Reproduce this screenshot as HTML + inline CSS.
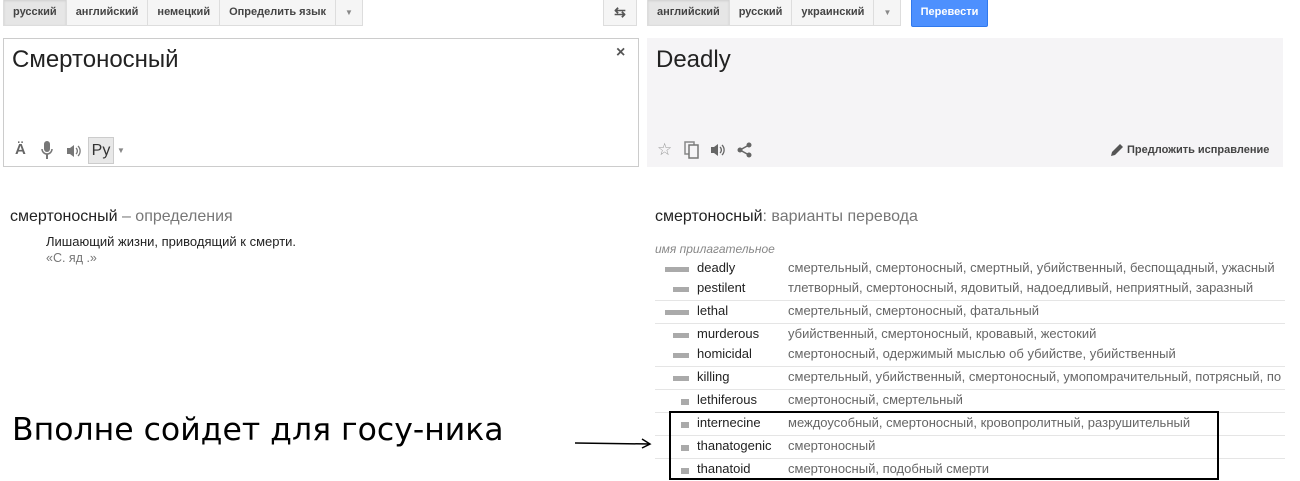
<!DOCTYPE html>
<html><head><meta charset="utf-8"><style>
*{margin:0;padding:0;box-sizing:border-box}
body{width:1300px;height:481px;background:#fff;position:relative;overflow:hidden;font-family:"Liberation Sans",Arial,sans-serif;color:#222}
.a{position:absolute;white-space:nowrap}
.tabs{position:absolute;top:0;height:26px;display:flex;border:1px solid #ddd;border-top:none;background:#f5f5f5;font-size:11px;font-weight:bold;color:#444}
.tabs div{padding:0 9px;line-height:25px;border-right:1px solid #ddd}
.tabs div:last-child{border-right:none}
.tabs .sel{background:#e6e6e6;box-shadow:inset 0 1px 2px rgba(0,0,0,.1)}
.car{font-size:8px;color:#888}
.row{position:absolute;left:655px;width:630px;height:23px;font-size:12.5px;overflow:hidden}
.bar{position:absolute;top:10px;height:5px;background:#aaa}
.w{position:absolute;left:42px;top:3px;color:#222;font-size:13px}
.t{position:absolute;left:133px;top:3px;color:#666;font-size:13px}
.ln{position:absolute;left:655px;width:630px;height:1px;background:#e5e5e5}
</style></head><body>
<div class="tabs" style="left:3px"><div class="sel">русский</div><div>английский</div><div>немецкий</div><div>Определить язык</div><div class="car">▼</div></div>
<div class="a" style="left:603px;top:0;width:34px;height:26px;border:1px solid #ddd;border-top:none;background:#f5f5f5;text-align:center;line-height:24px;color:#555;font-size:14px;font-weight:bold">⇆</div>
<div class="tabs" style="left:647px"><div class="sel">английский</div><div>русский</div><div>украинский</div><div class="car">▼</div></div>
<div class="a" style="left:911px;top:0;width:77px;height:27px;background:#4d90fe;border:1px solid #3079ed;border-top:none;border-radius:0 0 2px 2px;color:#fff;font-size:11px;font-weight:bold;text-align:center;line-height:25px">Перевести</div>

<div class="a" style="left:3px;top:38px;width:636px;height:129px;border:1px solid #ccc;background:#fff"></div>
<div class="a" style="left:12px;top:46px;font-size:24px;color:#222">Смертоносный</div>
<div class="a" style="left:616px;top:44px;font-size:16px;color:#555;font-weight:bold">×</div>
<div class="a" style="left:15px;top:141px;font-size:15px;color:#666;font-weight:bold">Ä</div>
<svg class="a" style="left:40px;top:141px" width="14" height="20"><rect x="4" y="0" width="6" height="11" rx="3" fill="#777"/><path d="M2 8a5 5 0 0 0 10 0" stroke="#777" stroke-width="1.5" fill="none"/><rect x="6" y="13" width="2" height="5" fill="#777"/></svg>
<svg class="a" style="left:66px;top:144px" width="16" height="14"><path d="M1 4h3l4-3v12l-4-3H1z" fill="#777"/><path d="M10 4a4 4 0 0 1 0 6M12 2a7 7 0 0 1 0 10" stroke="#777" stroke-width="1.3" fill="none"/></svg>
<div class="a" style="left:88px;top:137px;width:26px;height:27px;background:#e8e8e8;border:1px solid #ccc;font-size:16px;line-height:25px;text-align:center;color:#333">Ру</div>
<div class="a car" style="left:117px;top:146px">▼</div>

<div class="a" style="left:647px;top:38px;width:636px;height:129px;background:#f5f4f6"></div>
<div class="a" style="left:656px;top:46px;font-size:24px;color:#222">Deadly</div>
<div class="a" style="left:657px;top:140px;font-size:17px;color:#999">☆</div>
<svg class="a" style="left:684px;top:141px" width="16" height="18"><rect x="1" y="1" width="9" height="12" fill="none" stroke="#888" stroke-width="1.5"/><rect x="5" y="4" width="9" height="13" fill="#f5f4f6" stroke="#777" stroke-width="1.5"/></svg>
<svg class="a" style="left:710px;top:143px" width="16" height="14"><path d="M1 4h3l4-3v12l-4-3H1z" fill="#666"/><path d="M10 4a4 4 0 0 1 0 6M12 2a7 7 0 0 1 0 10" stroke="#666" stroke-width="1.3" fill="none"/></svg>
<svg class="a" style="left:737px;top:142px" width="16" height="16"><circle cx="12" cy="3" r="2.5" fill="#666"/><circle cx="3" cy="8" r="2.5" fill="#666"/><circle cx="12" cy="13" r="2.5" fill="#666"/><path d="M12 3L3 8l9 5" stroke="#666" stroke-width="1.5" fill="none"/></svg>
<svg class="a" style="left:1110px;top:143px" width="14" height="14"><path d="M1 13l1-4 8-8 3 3-8 8z" fill="#555"/></svg>
<div class="a" style="left:1127px;top:144px;font-size:11px;font-weight:bold;color:#444">Предложить исправление</div>

<div class="a" style="left:10px;top:208px;font-size:16px;color:#222">смертоносный <span style="color:#777">– определения</span></div>
<div class="a" style="left:46px;top:234px;font-size:13px;color:#222">Лишающий жизни, приводящий к смерти.</div>
<div class="a" style="left:46px;top:251px;font-size:12.5px;color:#777">«С. яд .»</div>

<div class="a" style="left:655px;top:208px;font-size:16px;color:#222">смертоносный<span style="color:#777">: варианты перевода</span></div>
<div class="a" style="left:655px;top:242px;font-size:12px;font-style:italic;color:#888">имя прилагательное</div>

<div class="row" style="top:257px"><div class="bar" style="left:10px;width:24px"></div><div class="w">deadly</div><div class="t">смертельный, смертоносный, смертный, убийственный, беспощадный, ужасный</div></div>
<div class="row" style="top:277px"><div class="bar" style="left:18px;width:16px"></div><div class="w">pestilent</div><div class="t">тлетворный, смертоносный, ядовитый, надоедливый, неприятный, заразный</div></div>
<div class="ln" style="top:300px"></div>
<div class="row" style="top:300px"><div class="bar" style="left:10px;width:24px"></div><div class="w">lethal</div><div class="t">смертельный, смертоносный, фатальный</div></div>
<div class="ln" style="top:323px"></div>
<div class="row" style="top:323px"><div class="bar" style="left:18px;width:16px"></div><div class="w">murderous</div><div class="t">убийственный, смертоносный, кровавый, жестокий</div></div>
<div class="row" style="top:343px"><div class="bar" style="left:18px;width:16px"></div><div class="w">homicidal</div><div class="t">смертоносный, одержимый мыслью об убийстве, убийственный</div></div>
<div class="ln" style="top:366px"></div>
<div class="row" style="top:366px"><div class="bar" style="left:18px;width:16px"></div><div class="w">killing</div><div class="t">смертельный, убийственный, смертоносный, умопомрачительный, потрясный, по</div></div>
<div class="ln" style="top:389px"></div>
<div class="row" style="top:389px"><div class="bar" style="left:26px;width:8px;height:6px"></div><div class="w">lethiferous</div><div class="t">смертоносный, смертельный</div></div>
<div class="ln" style="top:412px"></div>
<div class="row" style="top:412px"><div class="bar" style="left:26px;width:8px;height:6px"></div><div class="w">internecine</div><div class="t">междоусобный, смертоносный, кровопролитный, разрушительный</div></div>
<div class="ln" style="top:435px"></div>
<div class="row" style="top:435px"><div class="bar" style="left:26px;width:8px;height:6px"></div><div class="w">thanatogenic</div><div class="t">смертоносный</div></div>
<div class="ln" style="top:458px"></div>
<div class="row" style="top:458px"><div class="bar" style="left:26px;width:8px;height:6px"></div><div class="w">thanatoid</div><div class="t">смертоносный, подобный смерти</div></div>

<div class="a" style="left:669px;top:411px;width:550px;height:69px;border:2px solid #000"></div>
<div class="a" style="left:12px;top:412px;font-family:'DejaVu Sans',sans-serif;font-size:31.5px;color:#000">Вполне сойдет для госу-ника</div>
<svg class="a" style="left:574px;top:437px" width="80" height="12"><path d="M1 6l75 1" stroke="#000" stroke-width="1.5"/><path d="M68 2l8 5-8 4" stroke="#000" stroke-width="1.5" fill="none"/></svg>
</body></html>
